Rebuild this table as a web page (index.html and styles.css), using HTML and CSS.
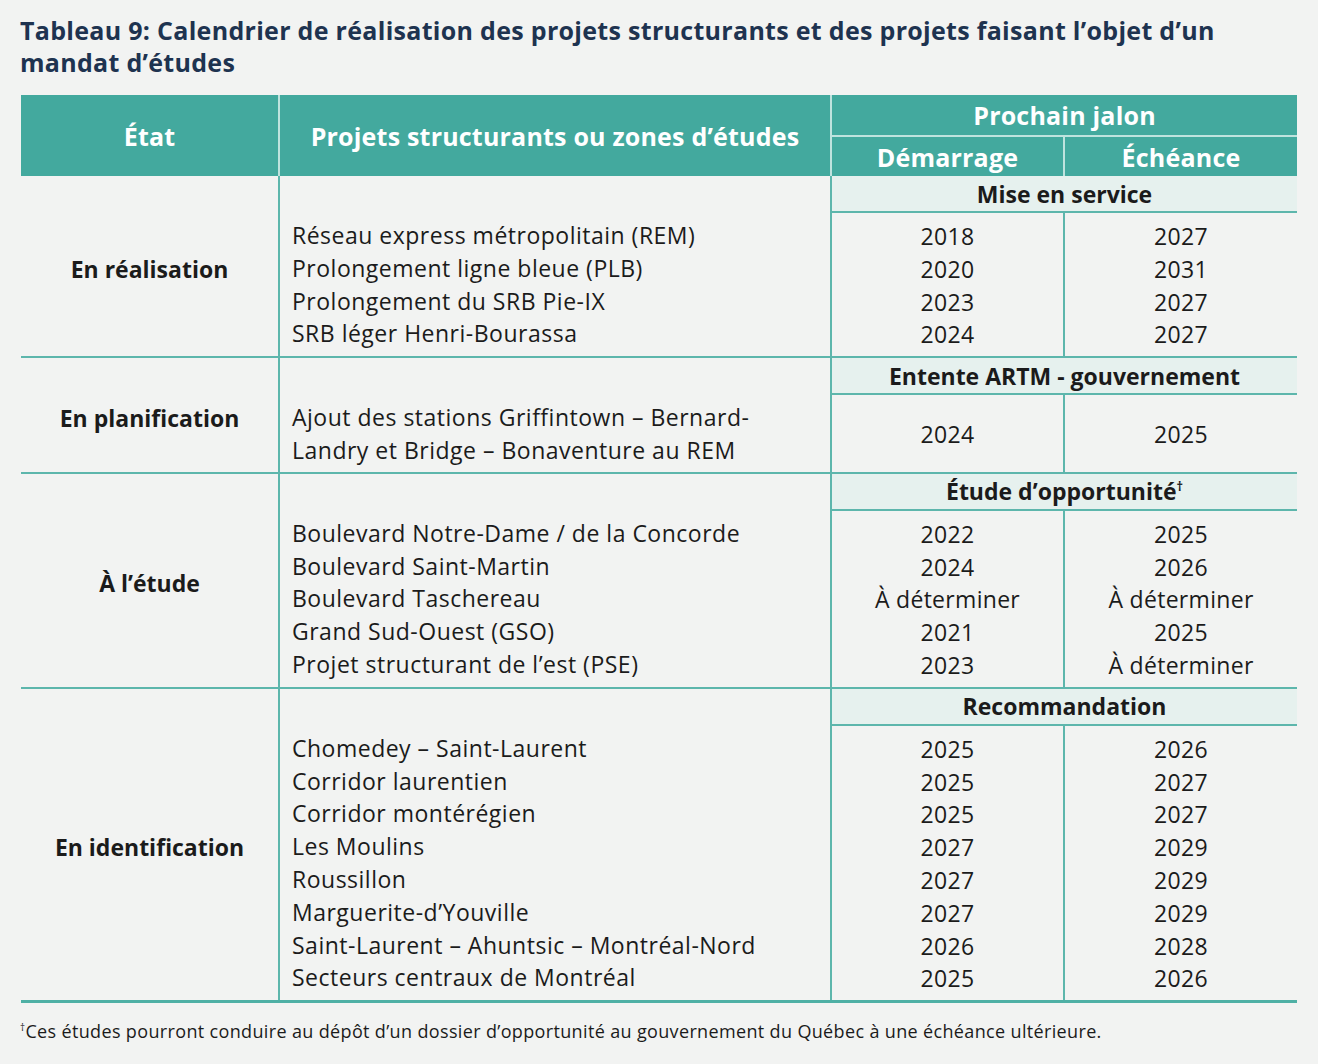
FILE: index.html
```html
<!DOCTYPE html>
<html lang="fr">
<head>
<meta charset="utf-8">
<title>Tableau 9</title>
<link rel="stylesheet" href="styles.css">
</head>
<body>
<div class="page">
  <h1 class="title">Tableau 9: Calendrier de réalisation des projets structurants et des projets faisant l’objet d’un mandat d’études</h1>
  <table class="tbl">
    <colgroup>
      <col class="c-etat"><col class="c-proj"><col class="c-date"><col class="c-date">
    </colgroup>
    <thead>
      <tr>
        <th rowspan="2" class="h-main">État</th>
        <th rowspan="2" class="h-main">Projets structurants ou zones d’études</th>
        <th colspan="2" class="h-top">Prochain jalon</th>
      </tr>
      <tr>
        <th class="h-sub">Démarrage</th>
        <th class="h-sub h-last">Échéance</th>
      </tr>
    </thead>
    <tbody class="sec">
      <tr>
        <td rowspan="2" class="etat">En réalisation</td>
        <td rowspan="2" class="proj"><div>Réseau express métropolitain (REM)</div><div>Prolongement ligne bleue (PLB)</div><div>Prolongement du SRB Pie-IX</div><div>SRB léger Henri-Bourassa</div></td>
        <td colspan="2" class="milestone">Mise en service</td>
      </tr>
      <tr>
        <td class="date"><div>2018</div><div>2020</div><div>2023</div><div>2024</div></td>
        <td class="date"><div>2027</div><div>2031</div><div>2027</div><div>2027</div></td>
      </tr>
    </tbody>
    <tbody class="sec">
      <tr>
        <td rowspan="2" class="etat">En planification</td>
        <td rowspan="2" class="proj"><div>Ajout des stations Griffintown – Bernard-</div><div>Landry et Bridge – Bonaventure au REM</div></td>
        <td colspan="2" class="milestone">Entente ARTM - gouvernement</td>
      </tr>
      <tr>
        <td class="date mid"><div>2024</div></td>
        <td class="date mid"><div>2025</div></td>
      </tr>
    </tbody>
    <tbody class="sec">
      <tr>
        <td rowspan="2" class="etat">À l’étude</td>
        <td rowspan="2" class="proj"><div>Boulevard Notre-Dame / de la Concorde</div><div>Boulevard Saint-Martin</div><div>Boulevard Taschereau</div><div>Grand Sud-Ouest (GSO)</div><div>Projet structurant de l’est (PSE)</div></td>
        <td colspan="2" class="milestone">Étude d’opportunité<sup class="dag">†</sup></td>
      </tr>
      <tr>
        <td class="date"><div>2022</div><div>2024</div><div>À déterminer</div><div>2021</div><div>2023</div></td>
        <td class="date"><div>2025</div><div>2026</div><div>À déterminer</div><div>2025</div><div>À déterminer</div></td>
      </tr>
    </tbody>
    <tbody class="sec last">
      <tr>
        <td rowspan="2" class="etat">En identification</td>
        <td rowspan="2" class="proj"><div>Chomedey – Saint-Laurent</div><div>Corridor laurentien</div><div>Corridor montérégien</div><div>Les Moulins</div><div>Roussillon</div><div>Marguerite-d’Youville</div><div>Saint-Laurent – Ahuntsic – Montréal-Nord</div><div>Secteurs centraux de Montréal</div></td>
        <td colspan="2" class="milestone">Recommandation</td>
      </tr>
      <tr>
        <td class="date"><div>2025</div><div>2025</div><div>2025</div><div>2027</div><div>2027</div><div>2027</div><div>2026</div><div>2025</div></td>
        <td class="date"><div>2026</div><div>2027</div><div>2027</div><div>2029</div><div>2029</div><div>2029</div><div>2028</div><div>2026</div></td>
      </tr>
    </tbody>
  </table>
  <p class="note"><sup class="dag">†</sup>Ces études pourront conduire au dépôt d’un dossier d’opportunité au gouvernement du Québec à une échéance ultérieure.</p>
</div>
</body>
</html>
```

FILE: styles.css
```css
html, body {
  margin: 0;
  padding: 0;
  background: #f2f3f2;
}
body {
  font-family: "Open Sans", "Noto Sans", sans-serif;
  color: #1b1b1b;
}
.page {
  padding: 14px 21px 0 20px;
  width: 1277px;
}
.title {
  margin: 0;
  font-size: 25px;
  letter-spacing: 0.3px;
  line-height: 32px;
  font-weight: 700;
  color: #1e3350;
  width: 1230px;
}
.tbl {
  margin-top: 17px;
  margin-left: 1px;
  width: 1276px;
  table-layout: fixed;
  border-collapse: collapse;
  font-size: 23px;
}
.c-etat { width: 258px; }
.c-proj { width: 552px; }
.c-date { width: 233px; }

thead th {
  background: #43a99e;
  color: #ffffff;
  font-weight: 700;
  font-size: 25px;
  letter-spacing: 0.2px;
  padding: 0;
  text-align: center;
  vertical-align: middle;
}
.h-main {
  height: 81px;
  border-right: 2px solid #bfe3de;
}
.h-top {
  height: 40px;
  border-bottom: 2px solid #bfe3de;
}
.h-sub {
  height: 39px;
  border-right: 2px solid #bfe3de;
}
.h-last { border-right: none; }

td {
  padding: 0;
  vertical-align: top;
}
.sec {
  border-bottom: 2px solid #5db6ac;
}
.sec.last {
  border-bottom: 3px solid #4fb0a5;
}
.etat {
  font-weight: 700;
  text-align: center;
  vertical-align: middle;
  border-right: 2px solid #5db6ac;
  padding-top: 6px;
}
.proj {
  padding: 43px 12px 5px 12px;
  line-height: 32.8px;
  letter-spacing: 0.5px;
  border-right: 2px solid #5db6ac;
  vertical-align: top;
  white-space: nowrap;
}
.milestone {
  background: #e6f1ee;
  font-weight: 700;
  text-align: center;
  height: 35px;
  vertical-align: middle;
  border-bottom: 2px solid #5db6ac;
}
.date {
  text-align: center;
  line-height: 32.8px;
  letter-spacing: 0.3px;
  padding: 7px 0 5px 0;
}
tr > .date:nth-last-child(2) {
  border-right: 2px solid #5db6ac;
}
.date.mid {
  vertical-align: middle;
}
.dag {
  font-size: 0.55em;
  vertical-align: 0.7em;
  line-height: 0;
}
.note {
  margin: 17px 0 0 0;
  font-size: 18px;
  letter-spacing: 0.35px;
  line-height: 22px;
}
```
